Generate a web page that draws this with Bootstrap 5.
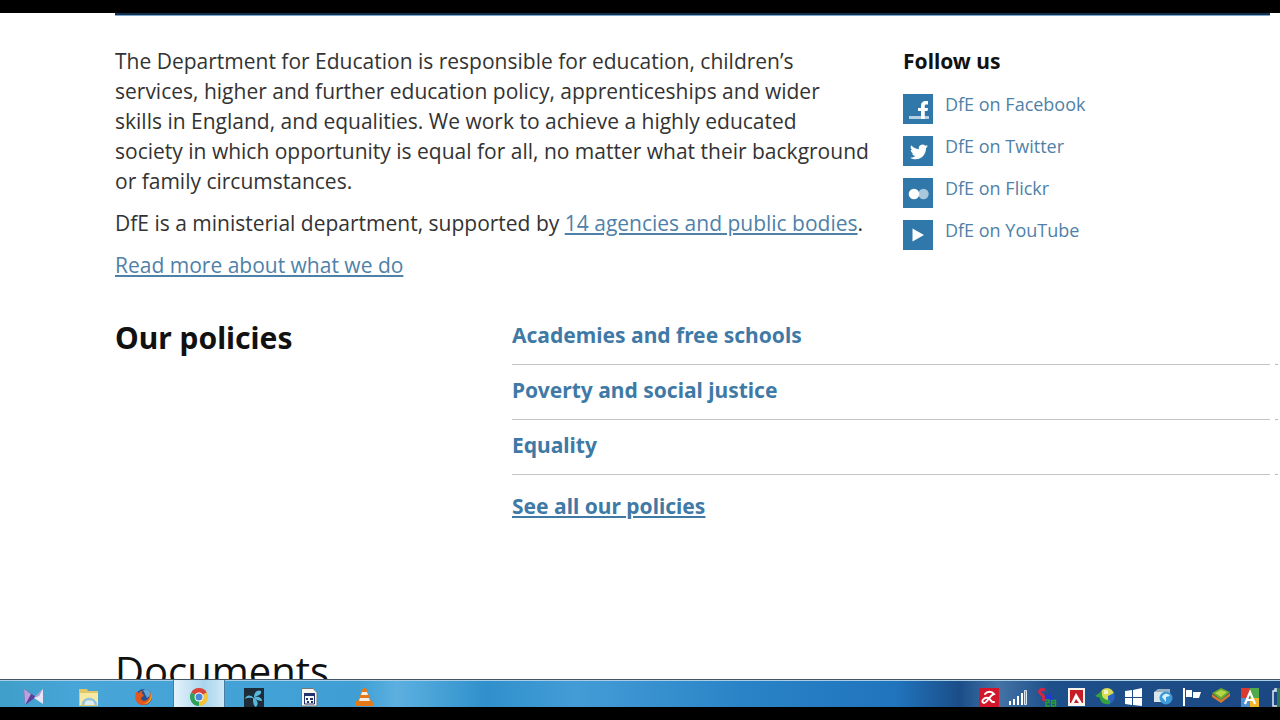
<!DOCTYPE html>
<html lang="en">
<head>
<meta charset="utf-8">
<meta name="viewport" content="width=device-width, initial-scale=1">
<title>Department for Education</title>
<link href="https://cdn.jsdelivr.net/npm/bootstrap@5.3.0/dist/css/bootstrap.min.css" rel="stylesheet">
<style>
body{font-family:"Open Sans","Noto Sans",sans-serif;color:#333;background:#fff}
.edge{height:13px;background:#000}
.page{padding:0 10px 0 115px;min-height:0}
.top-rule{height:3px;background:linear-gradient(#14304f,#14304f 2px,#7fa9cc 2px)}
.intro{padding-top:30px}
.copy{font-size:21px;line-height:30px;padding-right:16px}
.copy p{margin-bottom:12px}
.copy a,.social a{color:#4f81a8}
.social-col{padding-left:18px}
.heading-s,.heading-m,.policy-list a,.see-all{font-family:"Noto Sans","Open Sans",sans-serif;font-weight:700}
.heading-s{font-size:21px;line-height:30px;color:#111;margin:0}
.social{margin-top:16px}
.social li{height:42px;gap:12px}
.social a{font-size:18px;line-height:24px;text-decoration:none}
.social svg{width:30px;height:30px;margin-top:2px}
.policies{margin-top:40px}
.heading-m{font-size:30px;line-height:36px;color:#111;margin:0}
.policy-col{padding-left:12px}
.policy-list a,.see-all{color:#3f7aa6;font-size:21px;line-height:30px}
.policy-list a{display:block;text-decoration:none}
.see-all{display:table;margin-top:16px}
.policy-list li{border-bottom:1px solid #c4c4c4;padding-bottom:14px;position:relative}
.policy-list li+li{padding-top:10px}
.policy-list li::after{content:"";position:absolute;right:-8px;bottom:-1px;width:3px;height:1px;background:#bbb}
.documents{font-size:40px;line-height:48px;color:#111;font-weight:400;margin:126px 0 0}
.taskbar{height:28px;border-top:1px solid #456;box-shadow:inset 0 1px #a9cfe8;padding-left:9px;background:linear-gradient(90deg,#3f9fc9,#48a5d8 6%,#3f9fd4 28%,#5cb0e0 31%,#3090cb 38%,#449cd6 45%,#2a83c6 58%,#2074bd 70%,#1b4d88 75%,#4473a5 78%,#1e4f8a 82%,#1b4882)}
.launch{gap:5px}
.launch button{width:50px;height:27px;padding:8px 0 0;border:0;background:none;line-height:0}
.launch button.active{background:linear-gradient(90deg,#e6f3fa,#a9d5ee 60%,#cfe8f5);box-shadow:0 0 0 1px #4b7d9e}
.tray button{width:29px;height:27px;padding:8px 0 0;border:0;background:none;line-height:0}
.tray button:last-child{width:16px;text-align:right}
.taskbar svg{width:20px;height:20px}
</style>
</head>
<body class="d-flex flex-column vh-100 overflow-hidden">
<div class="edge flex-shrink-0"></div>
<main class="page flex-grow-1 overflow-hidden">
  <div class="top-rule"></div>
  <section class="row g-0 intro">
    <div class="col-8 copy">
      <p>The Department for Education is responsible for education, children’s services, higher and further education policy, apprenticeships and wider skills in England, and equalities. We work to achieve a highly educated society in which opportunity is equal for all, no matter what their background or family circumstances.</p>
      <p>DfE is a ministerial department, supported by <a href="#">14 agencies and public bodies</a>.</p>
      <p class="mb-0"><a href="#">Read more about what we do</a></p>
    </div>
    <div class="col-4 social-col">
      <h2 class="heading-s">Follow us</h2>
      <ul class="social list-unstyled mb-0">
        <li class="d-flex"><svg viewBox="0 0 30 30" aria-hidden="true"><path fill="#3078a9" d="M0 0h30v30H0z"/><path fill="#b5d0e2" d="M6 22h20v3H6z"/><path fill="#fff" d="M18 25V17h-3v-3h3v-2.500c0-3 2-4.500 4.500-4.500H25v3.500h-1.700c-1.200 0-1.500.5-1.500 1.500v2H25l-.5 3h-2.700v8z"/></svg><a href="#">DfE on Facebook</a></li>
        <li class="d-flex"><svg viewBox="0 0 30 30" aria-hidden="true"><path fill="#3078a9" d="M0 0h30v30H0z"/><path fill="#fff" d="M25 10.200l-2 .6c.8-.5 1.300-1.100 1.500-1.900l-2.300.9a3.700 3.700 0 0 0-6.300 3.400c-3 0-5.800-1.600-7.700-3.900-1 1.700-.5 3.800 1.200 5l-1.700-.5c0 1.800 1.300 3.300 3 3.700l-1.700.1c.5 1.500 1.800 2.500 3.500 2.500A7.600 7.600 0 0 1 7 21.700c7.500 4.300 16-.4 16-9.600.8-.5 1.400-1.100 2-1.900z"/></svg><a href="#">DfE on Twitter</a></li>
        <li class="d-flex"><svg viewBox="0 0 30 30" aria-hidden="true"><path fill="#3078a9" d="M0 0h30v30H0z"/><circle cx="20.500" cy="16" r="5.200" fill="#a9c8dd"/><circle cx="11" cy="16" r="5.300" fill="#fff"/></svg><a href="#">DfE on Flickr</a></li>
        <li class="d-flex"><svg viewBox="0 0 30 30" aria-hidden="true"><path fill="#3078a9" d="M0 0h30v30H0z"/><path fill="#fff" d="M9.500 8.500v13L21 15z"/></svg><a href="#">DfE on YouTube</a></li>
      </ul>
    </div>
  </section>
  <section class="row g-0 policies">
    <div class="col-4"><h2 class="heading-m">Our policies</h2></div>
    <div class="col-8 policy-col">
      <ul class="policy-list list-unstyled mb-0">
        <li><a href="#">Academies and free schools</a></li>
        <li><a href="#">Poverty and social justice</a></li>
        <li><a href="#">Equality</a></li>
      </ul>
      <a class="see-all" href="#">See all our policies</a>
    </div>
  </section>
  <h2 class="documents">Documents</h2>
</main>
<footer class="taskbar d-flex flex-shrink-0 overflow-hidden">
  <div class="launch d-flex">
    <button aria-label="KMPlayer"><svg viewBox="0 0 20 20"><path fill="#5b3f9c" d="M0 1l12 8L1 17z"/><path fill="#b9a3d8" d="M0 1l7 5-6 11z"/><path fill="#e8e4f4" d="M19 1v15l-9-6z"/><path fill="#a99ad0" d="M19 1l-4 7-5 2z"/></svg></button>
    <button aria-label="File Explorer"><svg viewBox="0 0 20 20"><path fill="#e3c766" d="M0 1h8l1 2h10v15H0z"/><path fill="#f8e9a2" d="M1 5h18v12H1z"/><path fill="none" stroke="#8fc3df" stroke-width="2.500" d="M4 17c0-8 12-8 13 0"/><path fill="#d7edf7" d="M7 13h7v4H7z"/></svg></button>
    <button aria-label="Firefox"><svg viewBox="0 0 20 20"><circle cx="10" cy="9" r="8" fill="#254f8f"/><path fill="#5fa8d6" d="M9 2c4-2 8 1 8 5l-4 3z"/><path fill="#e2571e" d="M2 4l3 1c1-2 2-2 4-2-2 2-1 3 1 4-1 2-3 2-3 4 2 3 7 2 8-2l2-5c2 6-1 13-8 13C2 17 0 10 2 4z"/><path fill="#f5a52a" d="M17 4c3 7-2 13-8 12 6-1 8-6 8-12z"/></svg></button>
    <button class="active" aria-label="Chrome"><svg viewBox="0 0 20 20"><path fill="#db4437" d="M10 9L2.200 4.500a9 9 0 0 1 15.600 0z"/><path fill="#f4c43a" d="M10 9l7.800-4.500A9 9 0 0 1 10 18z"/><path fill="#2fa05a" d="M10 9v9A9 9 0 0 1 2.200 4.500z"/><circle cx="10" cy="9" r="4.500" fill="#fff"/><circle cx="10" cy="9" r="3.500" fill="#4a86d8"/></svg></button>
    <button aria-label="Telenor"><svg viewBox="0 0 20 20"><path fill="#1d2c38" d="M0 0h20v20H0z"/><path fill="#58b8dc" d="M10 9c0-4 3-8 7-6 1 3-2 5-7 6zM10 10C6 6 2 7 1 11c3-2 5-1 9-1zM10 9c5-1 8 1 8 4-3 0-6-1-8-4zM9 9c5 3 6 7 3 10-3-1-3-6-3-10z"/></svg></button>
    <button aria-label="Player"><svg viewBox="0 0 20 20"><path fill="#f8f8f3" stroke="#777" d="M2.500.5H14l4 4V18H2.500z"/><path fill="#23336e" d="M5 5h11v3H5zM7 10h2v2H7zM11 10h3v2h-3zM8 13h2v2H8zM12 13h2v2h-2z"/><path fill="none" stroke="#23336e" d="M5.500 5v11h10V5"/></svg></button>
    <button aria-label="VLC"><svg viewBox="0 0 20 20"><path fill="#e67817" d="M9 0h3l5 13H4zM2 13h16l2 5H1z"/><path fill="#f3eee6" d="M8 4h5l1 3H7zM6 10h9l1 3H5z"/></svg></button>
  </div>
  <div class="tray d-flex ms-auto">
    <button aria-label="Avira"><svg viewBox="0 0 20 20"><path fill="#d31629" d="M0 0h20v20H0z"/><path fill="none" stroke="#fff" stroke-width="2" stroke-linecap="round" d="M6 6c2-3 7-3 9 0-4 1-7 9-10 9-4-1 0-6 4-5 3 0 2 5 6 4"/></svg></button>
    <button aria-label="Signal"><svg viewBox="0 0 20 20"><path fill="#fff" d="M1 13h2v4H1zM5 11h2v6H5zM9 8h2v9H9zM13 5h2v12h-2z"/><path fill="#6f91b4" stroke="#dce7f0" d="M16.500 2.500h2v14h-2z"/></svg></button>
    <button aria-label="Network"><svg viewBox="0 0 20 20"><path fill="none" stroke="#d32545" stroke-width="3" d="M8 2C3 0 1 4 4 6s4 4 2 7"/><path fill="#2436d4" d="M8 6l3 2 3-3v4l3 2-4 3-5-2z"/><path fill="none" stroke="#27a12f" stroke-width="1.500" d="M8 12h4v2.500H9V18h4M14.500 18v-5.500h4V18zM14 15h4"/></svg></button>
    <button aria-label="Adobe"><svg viewBox="0 0 20 20"><path fill="#f7f4ee" d="M2 0h17v18H2z"/><path fill="#c51c27" d="M4 2h13v13H4z"/><path fill="#fff" d="M5 15l5-10 6 10h-3l-3-4-2 4z"/></svg></button>
    <button aria-label="Download manager"><svg viewBox="0 0 20 20"><circle cx="12" cy="7" r="7" fill="#d9dc55"/><path fill="#2c63c0" d="M13 8l6-3c2 5-1 11-6 11z"/><path fill="#35a240" d="M0 8l7-5v3c0 4 3 6 8 6v4c-6 1-10-2-10-6z"/><path fill="#fff" opacity=".7" d="M9 2h4v4H9z"/></svg></button>
    <button aria-label="Windows"><svg viewBox="0 0 20 20"><path fill="#fff" d="M1 3l7-1v7H1zM9 2l9-2v9H9zM1 10h7v7l-7-1zM9 10h9v8l-9-1z"/></svg></button>
    <button aria-label="Devices"><svg viewBox="0 0 20 20"><path fill="#9bb2c4" d="M1 4l4-3h12v12H1z"/><path fill="#dae6ee" d="M1 4h12v10H1z"/><circle cx="13" cy="10" r="6.500" fill="#3d9ad9"/><path fill="#d5effb" d="M9 9c2-4 6-4 8-1l-4 1v5z"/></svg></button>
    <button aria-label="Action center"><svg viewBox="0 0 20 20"><path fill="#fff" d="M1 0h2v18H1zM4 2h6v7H4z"/><path fill="#fff" d="M11 4h8l-2 6h-6z"/></svg></button>
    <button aria-label="BlueStacks"><svg viewBox="0 0 20 20"><path fill="#d8782c" d="M1 6l9 6 9-7v3l-9 7-9-6z"/><path fill="#6da92d" d="M1 5l9-5 9 4-9 8z"/><path fill="#b4d84a" d="M4 5l6-3 6 2-6 5z"/></svg></button>
    <button aria-label="Language"><svg viewBox="0 0 20 20"><path fill="#d93a32" d="M1 0h9v10H1z"/><path fill="#51a94c" d="M10 0h9v10h-9z"/><path fill="#4f8fd0" d="M1 10h9v9H1z"/><path fill="#f0b52a" d="M10 10h9v9h-9z"/><path fill="none" stroke="#fff" stroke-width="2.200" d="M5 16l5-12 5 12M7 12h6"/></svg></button>
    <button class="d-flex justify-content-end" aria-label="Battery"><svg class="flex-shrink-0" viewBox="0 0 20 20"><path fill="none" stroke="#dfe9f2" stroke-width="1.500" d="M18 3h-5v15h5M15 3V1h3"/><path fill="#2d7a54" d="M17 0h3v20h-3z"/></svg></button>
  </div>
</footer>
<div class="edge flex-shrink-0"></div>
<script src="https://cdn.jsdelivr.net/npm/bootstrap@5.3.0/dist/js/bootstrap.bundle.min.js"></script>
</body>
</html>
